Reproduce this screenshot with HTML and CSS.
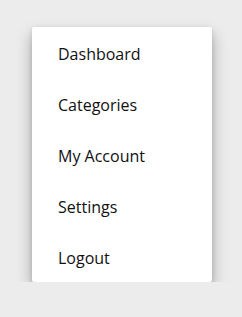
FILE: index.html
```html
<!DOCTYPE html>
<html>
<head>
<meta charset="utf-8">
<link rel="stylesheet" href="styles.css">
</head>
<body>
<nav class="menu">
  <a class="item" href="#">Dashboard</a>
  <a class="item" href="#">Categories</a>
  <a class="item" href="#">My Account</a>
  <a class="item" href="#">Settings</a>
  <a class="item" href="#">Logout</a>
</nav>
</body>
</html>
```
FILE: styles.css
```css
html, body {
  margin: 0;
  background: #ececec;
}
body {
  padding: 27px 0 0 32px;
  font-family: "Open Sans", "Noto Sans", sans-serif;
}
.menu {
  width: 180px;
  background: #fff;
  border-radius: 2px;
  box-shadow: 0 8px 16px rgba(0, 0, 0, 0.3), 0 2px 5px rgba(0, 0, 0, 0.12);
  display: flex;
  flex-direction: column;
}
.item {
  display: block;
  padding: 17px 26px 13px;
  font-size: 16px;
  line-height: 21px;
  color: #111;
  text-decoration: none;
}
```
